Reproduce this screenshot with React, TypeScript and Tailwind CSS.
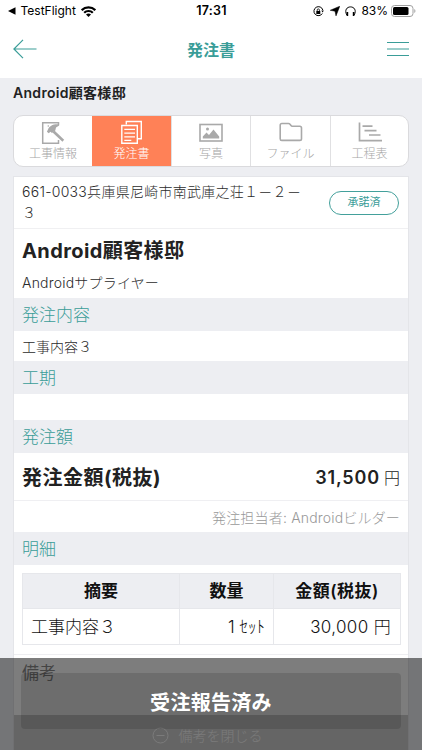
import React from 'react';

const tabs = [
  { label: '工事情報', icon: <ConstructionIcon /> },
  { label: '発注書', icon: <OrderIcon />, active: true },
  { label: '写真', icon: <PhotoIcon /> },
  { label: 'ファイル', icon: <FolderIcon /> },
  { label: '工程表', icon: <ScheduleIcon /> },
];

function ConstructionIcon() {
  return (
    <svg width="24" height="24" viewBox="0 0 24 24" fill="none" stroke="#a9a9a9" strokeWidth="1.5">
      <path d="M17.500 5V2.700H1.700v20.500h15.800V20" />
      <path d="M12.500 11.500 22.300 20.800" strokeWidth="2.600" />
      <path d="M7 9.500C8.500 6 11.500 4 17.500 4.300l.8 1.200-3.300 2-.7 3-3.300 2.500-1.500-1.200-1.800 1.500-1.800-1.500z" fill="#a9a9a9" stroke="none" />
      <circle cx="7.300" cy="6" r=".8" fill="#a9a9a9" stroke="none" />
    </svg>
  );
}

function OrderIcon() {
  return (
    <svg width="24" height="24" viewBox="0 0 24 24" fill="none" stroke="#fff" strokeWidth="1.400">
      <path d="M6.300 4.500V1.500h15v17.300H18" />
      <path d="M1.800 5.500h15.500v17.700H1.800z" />
      <path d="M4.300 9.300h10.700M4.300 13.100h10.700M4.300 16.900h10.700M4.300 20.300h7" strokeWidth="1.200" />
    </svg>
  );
}

function PhotoIcon() {
  return (
    <svg width="24" height="24" viewBox="0 0 24 24" fill="none" stroke="#a9a9a9" strokeWidth="1.600">
      <rect x="1" y="4.500" width="22" height="16.500" />
      <path d="M3.800 18.500v-2l3.700-4 2.500 2.500 4.500-5.500 5.700 7v2z" fill="#a9a9a9" stroke="none" />
      <circle cx="8.500" cy="9" r="1.500" fill="#a9a9a9" stroke="none" />
    </svg>
  );
}

function FolderIcon() {
  return (
    <svg width="24" height="24" viewBox="0 0 24 24" fill="none" stroke="#a9a9a9" strokeWidth="1.600">
      <path d="M2.800 3.500h6.700c.6 0 1 .2 1.300.6l1.200 1.500c.3.400.7.600 1.200.6h7.600c1 0 1.700.7 1.700 1.700v10.800c0 1-.7 1.700-1.700 1.700H2.800c-1 0-1.600-.7-1.600-1.700V5.200c0-1 .6-1.700 1.600-1.700z" />
    </svg>
  );
}

function ScheduleIcon() {
  return (
    <svg width="24" height="24" viewBox="0 0 24 24" fill="none" stroke="#a9a9a9" strokeWidth="1.700">
      <path d="M1.500 2.500v18.200H24M4.500 6.200h10M6.500 10.600h12M11 15h11.500" />
    </svg>
  );
}

function StatusBar() {
  return (
    <div className="grid h-[22px] grid-cols-[1fr_auto_1fr] items-center pr-[6px] pl-[8px] text-[12px] text-black">
      <div className="flex items-center">
        <svg width="8" height="8" viewBox="0 0 8 8">
          <path d="M0 4 7.500.3v7.400z" />
        </svg>
        <span className="ml-[4.5px]">TestFlight</span>
        <svg className="ml-[5px]" width="15" height="11" viewBox="0 0 15 11" fill="none" stroke="#000" strokeWidth="2.200">
          <path d="M.7 4.200a9.700 9.700 0 0 1 13.600 0M3.200 6.800a6 6 0 0 1 8.600 0" />
          <path d="M5 8.600a3.600 3.600 0 0 1 5 0L7.500 11z" fill="#000" stroke="none" />
        </svg>
      </div>
      <span className="pr-[1px] text-[12.5px] font-semibold tracking-[0.2px]">17:31</span>
      <div className="flex items-center justify-end">
        <svg width="11" height="11" viewBox="0 0 11 11" fill="none" stroke="#000">
          <path d="M9.300 7.500A4.500 4.500 0 1 1 9.800 4" />
          <path d="M8.300 4.500h2.600L9.600 6.500z" fill="#000" stroke="none" />
          <path d="M3.300 5h4v3h-4z" fill="#000" stroke="none" />
          <path d="M4.200 5V4a1.100 1.100 0 0 1 2.200 0v1" strokeWidth=".8" />
        </svg>
        <svg className="ml-[6px]" width="10" height="10" viewBox="0 0 10 10">
          <path d="M9.800.2 6 9.900 5 5.200.2 4.300z" stroke="#000" strokeWidth=".5" />
        </svg>
        <svg className="ml-[5px]" width="11" height="11" viewBox="0 0 11 11" fill="none" stroke="#000">
          <path d="M1.800 9C-.8 4 2 .9 5.500.9S11.800 4 9.200 9" />
          <path d="M2.400 6v4M8.600 6v4" strokeWidth="1.600" />
        </svg>
        <span className="ml-[5px]">83%</span>
        <svg className="ml-[3px]" width="25" height="12" viewBox="0 0 25 12">
          <rect x=".5" y=".5" width="21.500" height="11" rx="3" fill="none" stroke="#a0a0a0" />
          <rect x="2" y="2" width="15.500" height="8" rx="1.500" />
          <path d="M23.300 4v4c1.500-.6 1.500-3.400 0-4z" fill="#a0a0a0" />
        </svg>
      </div>
    </div>
  );
}

function SectionTitle({ children }: { children: React.ReactNode }) {
  return (
    <h3 className="flex h-[33px] items-center bg-[#edeef2] px-[8px] pt-[3px] text-[17px] font-light text-[#3a9d98]">
      {children}
    </h3>
  );
}

export default function App() {
  return (
    <main className="relative flex h-[750px] w-[422px] flex-col overflow-hidden bg-[#edeef2] font-['Inter','Noto_Sans_CJK_JP',sans-serif] text-[#2b2b2b]">
      {/* Status bar and header */}
      <header className="h-[78px] shrink-0 bg-white">
        <StatusBar />
        <div className="grid h-[54px] grid-cols-[1fr_auto_1fr] items-center px-[13px] text-[#3a9d98]">
          <svg width="24" height="20" viewBox="0 0 24 20" fill="none" stroke="currentColor" strokeWidth="1.200">
            <path d="M10 .8.900 10l9.100 9.200M.9 10H23.500" />
          </svg>
          <h1 className="pt-[1px] text-[16px] font-bold">発注書</h1>
          <svg className="justify-self-end" width="22" height="16" viewBox="0 0 22 16" stroke="currentColor" strokeWidth="1.200">
            <path d="M0 1.500h22M0 8h22M0 14.500h22" />
          </svg>
        </div>
      </header>

      <div className="px-[13px]">
        <h2 className="flex h-[37px] items-center pb-[8px] text-[14px] font-semibold tracking-[0.3px] text-[#222]">
          Android顧客様邸
        </h2>

        {/* Tabs */}
        <nav className="grid h-[52px] grid-cols-[78px_79px_79px_80px_1fr] overflow-hidden rounded-[10px] border border-[#dadadd] bg-white">
          {tabs.map((tab) => (
            <div
              key={tab.label}
              className={
                tab.active
                  ? 'flex flex-col items-center bg-[#ff8157] pt-[4px] text-white'
                  : 'flex flex-col items-center border-l border-[#e0e0e2] pt-[4px] text-[#a6a6a6] first:border-l-0'
              }
            >
              {tab.icon}
              <span className="mt-[1px] text-[12px] leading-[18px] font-light">{tab.label}</span>
            </div>
          ))}
        </nav>

        {/* Order card */}
        <section className="mt-[9px] w-[396px] border border-[#e4e5e9] bg-white">
          <div className="flex h-[52px] items-center justify-between border-b border-[#f0f0f2] pr-[9px] pl-[8px]">
            <p className="w-[285px] pb-[1px] text-[14px] leading-[21px] font-light tracking-[0.27px]">
              661-0033兵庫県尼崎市南武庫之荘１－２－３
            </p>
            <span className="flex h-[24px] w-[70px] items-center justify-center rounded-full border border-[#43a09b] text-[11px] text-[#3a9d98]">
              承諾済
            </span>
          </div>
          <div className="h-[69px] px-[8px] pt-[6px]">
            <p className="text-[20px] leading-[32px] font-bold tracking-[0.4px] text-[#222]">Android顧客様邸</p>
            <p className="mt-[5px] text-[14px] leading-[22px] font-light tracking-[0.2px]">Androidサプライヤー</p>
          </div>
          <SectionTitle>発注内容</SectionTitle>
          <p className="flex h-[30px] items-center px-[8px] text-[14px] font-light">工事内容３</p>
          <SectionTitle>工期</SectionTitle>
          <div className="h-[26px]" />
          <SectionTitle>発注額</SectionTitle>
          <div className="flex h-[48px] items-center justify-between border-b border-[#efeff2] px-[8px] pt-[2px] text-[#222]">
            <span className="text-[20px] font-bold tracking-[0.5px]">発注金額(税抜)</span>
            <span className="text-[16px] font-light">
              <b className="mr-[4px] text-[18px] font-semibold tracking-[0.85px]">31,500</b>円
            </span>
          </div>
          <p className="flex h-[31px] items-center justify-end px-[8px] pt-[2px] text-[14px] font-light tracking-[0.18px] text-[#999]">
            発注担当者: Androidビルダー
          </p>
          <SectionTitle>明細</SectionTitle>
          <div className="h-[90px] border-b border-[#eeeef1] px-[8px] pt-[8px]">
            <table className="w-[379px] table-fixed border-collapse text-[17px] leading-[24px] text-[#111]">
              <colgroup>
                <col className="w-[157px]" />
                <col className="w-[94px]" />
                <col />
              </colgroup>
              <thead>
                <tr className="h-[35px] bg-[#edeef2]">
                  <th className="border border-[#e6e7eb] font-semibold">摘要</th>
                  <th className="border border-[#e6e7eb] font-semibold">数量</th>
                  <th className="border border-[#e6e7eb] font-semibold tracking-[0.5px]">金額(税抜)</th>
                </tr>
              </thead>
              <tbody className="font-light">
                <tr className="h-[36px]">
                  <td className="border border-[#e6e7eb] pl-[8px]">工事内容３</td>
                  <td className="border border-[#e6e7eb] pr-[8px] text-right">1 ｾｯﾄ</td>
                  <td className="border border-[#e6e7eb] pr-[9px] text-right tracking-[0.35px]">30,000 円</td>
                </tr>
              </tbody>
            </table>
          </div>
          <div className="h-[60px] px-[8px] pt-[4px] text-[17px] leading-[28px] text-[#8c8c8c]">備考</div>
          <div className="flex h-[40px] items-center justify-center gap-[10px] bg-[#cecece] pr-[8px] text-[14px] font-light text-[#fafafa]">
            <svg width="17" height="17" viewBox="0 0 17 17" fill="none" stroke="currentColor">
              <circle cx="8.500" cy="8.500" r="7.500" />
              <path d="M4.500 8.500h8" />
            </svg>
            備考を閉じる
          </div>
        </section>
      </div>

      {/* Fixed footer over the card */}
      <footer className="absolute inset-x-0 bottom-0 h-[92px] bg-black/51 px-[21px] pt-[15px]">
        <button className="flex h-[56px] w-full items-center justify-center rounded-[4px] bg-black/12 pt-[3px] text-[20px] font-bold tracking-[0.3px] text-white">
          受注報告済み
        </button>
      </footer>
    </main>
  );
}
